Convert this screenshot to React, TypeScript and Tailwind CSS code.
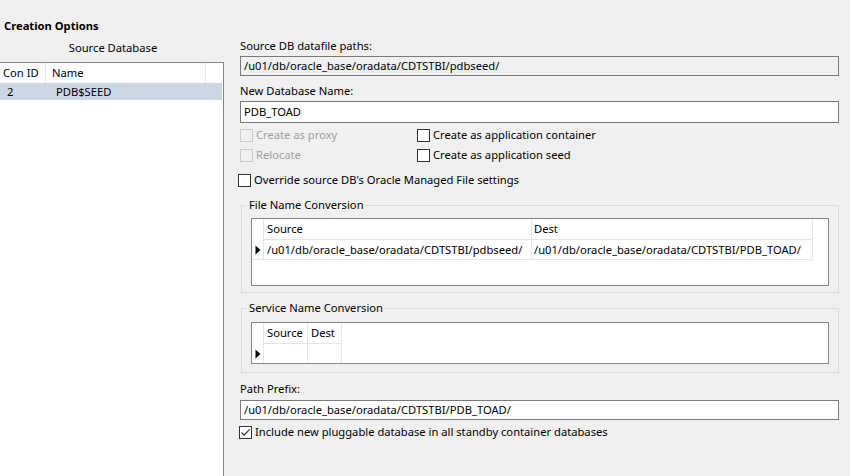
import React from 'react';

function CheckBox({ label, checked = false, disabled = false }: { label: string; checked?: boolean; disabled?: boolean }) {
  return (
    <div className="flex items-center h-[20px]">
      <span
        className={
          disabled
            ? 'w-[13px] h-[13px] border border-[#cccccc] bg-[#f0f0f0] shrink-0'
            : 'w-[13px] h-[13px] border border-[#333333] bg-white shrink-0 flex items-center justify-center'
        }
      >
        {checked && (
          <svg width="11" height="11" viewBox="0 0 11 11">
            <path d="M1.5 5.5 L4.2 8.2 L9.6 2.4" fill="none" stroke="#333" strokeWidth="1.2" />
          </svg>
        )}
      </span>
      <span className={disabled ? 'ml-[3px] text-[#a0a0a0]' : 'ml-[3px] text-black'}>{label}</span>
    </div>
  );
}

function Arrow() {
  return (
    <svg width="6" height="10" viewBox="0 0 6 10">
      <path d="M0.5 0.5 L5.5 5 L0.5 9.5 Z" fill="#000" />
    </svg>
  );
}

export default function App() {
  return (
    <div
      className="w-[850px] h-[476px] overflow-hidden bg-[#f0f0f0] text-[11.2px] leading-[16px] text-black flex flex-col"
      style={{ fontFamily: '"Noto Sans", "Open Sans", sans-serif' }}
    >
      <div className="pt-[18px] pl-[4px] font-bold h-[36px]">Creation Options</div>

      <div className="flex flex-1 min-h-0">
        {/* left: source database list */}
        <div className="w-[224px] flex flex-col pt-[4px]">
          <div className="text-center h-[16px] pl-[2px]">Source Database</div>
          <div className="mt-[6px] flex-1 bg-white border border-[#828790] border-l-0 border-b-0">
            <div className="flex h-[20px] items-center">
              <div className="w-[46px] pl-[3px] h-full flex items-center border-r border-[#e5e5e5]">Con ID</div>
              <div className="w-[160px] pl-[6px] h-full flex items-center border-r border-[#e5e5e5]">Name</div>
            </div>
            <div className="flex h-[17px] items-center bg-[#cbd8e4] mr-[1px]">
              <div className="w-[46px] pl-[7px]">2</div>
              <div className="pl-[10px]">PDB$SEED</div>
            </div>
          </div>
        </div>

        {/* right: options */}
        <div className="ml-[16px] w-[599px] flex flex-col pt-[2px]">
          <div className="h-[16px]">Source DB datafile paths:</div>
          <div className="mt-[2px] h-[20px] border border-[#7a7a7a] bg-[#f0f0f0] flex items-center pl-[3px]">
            /u01/db/oracle_base/oradata/CDTSTBI/pdbseed/
          </div>

          <div className="mt-[7px] h-[16px]">New Database Name:</div>
          <div className="mt-[2px] h-[22px] border border-[#7a7a7a] bg-white flex items-center pl-[3px]">PDB_TOAD</div>

          <div className="mt-[2px] flex">
            <div className="w-[176px]">
              <CheckBox label="Create as proxy" disabled />
              <CheckBox label="Relocate" disabled />
            </div>
            <div className="ml-[1px]">
              <CheckBox label="Create as application container" />
              <CheckBox label="Create as application seed" />
            </div>
          </div>

          <div className="mt-[5px] -ml-[2px]">
            <CheckBox label="Override source DB's Oracle Managed File settings" />
          </div>

          {/* File Name Conversion */}
          <div className="relative ml-[1px] mt-[15px] border border-[#dcdcdc] pt-[12px] pb-[6px] pl-[9px] pr-[9px]">
            <span className="absolute -top-[9px] left-[5px] bg-[#f0f0f0] px-[2px] leading-[16px]">File Name Conversion</span>
            <div className="h-[68px] bg-white border border-[#828790]">
              <div className="flex h-[21px]">
                <div className="w-[12px] border-r border-[#e5e5e5]" />
                <div className="w-[268px] pl-[3px] flex items-center border-r border-b border-[#e5e5e5]">Source</div>
                <div className="w-[281px] pl-[2px] flex items-center border-r border-b border-[#e5e5e5]">Dest</div>
              </div>
              <div className="flex h-[20px]">
                <div className="w-[12px] flex items-center justify-center border-r border-b border-[#e5e5e5]">
                  <Arrow />
                </div>
                <div className="w-[268px] pl-[3px] flex items-center border-r border-b border-[#e5e5e5]">
                  /u01/db/oracle_base/oradata/CDTSTBI/pdbseed/
                </div>
                <div className="w-[281px] pl-[2px] flex items-center border-r border-b border-[#e5e5e5]">
                  /u01/db/oracle_base/oradata/CDTSTBI/PDB_TOAD/
                </div>
              </div>
            </div>
          </div>

          {/* Service Name Conversion */}
          <div className="relative ml-[1px] mt-[15px] border border-[#dcdcdc] pt-[13px] pb-[8px] pl-[9px] pr-[9px]">
            <span className="absolute -top-[9px] left-[5px] bg-[#f0f0f0] px-[2px] leading-[16px]">Service Name Conversion</span>
            <div className="h-[42px] bg-white border border-[#828790]">
              <div className="flex h-[21px]">
                <div className="w-[12px] border-r border-[#e5e5e5]" />
                <div className="w-[44px] pl-[3px] flex items-center border-r border-b border-[#e5e5e5]">Source</div>
                <div className="w-[34px] pl-[3px] flex items-center border-r border-b border-[#e5e5e5]">Dest</div>
              </div>
              <div className="flex h-[19px]">
                <div className="w-[12px] flex items-center justify-center border-r border-[#e5e5e5]">
                  <Arrow />
                </div>
                <div className="w-[44px] border-r border-[#e5e5e5]" />
                <div className="w-[34px] border-r border-[#e5e5e5]" />
              </div>
            </div>
          </div>

          <div className="mt-[8px] h-[16px]">Path Prefix:</div>
          <div className="mt-[3px] h-[20px] border border-[#7a7a7a] bg-white flex items-center pl-[3px]">
            /u01/db/oracle_base/oradata/CDTSTBI/PDB_TOAD/
          </div>

          <div className="mt-[2px] -ml-[1px]">
            <CheckBox label="Include new pluggable database in all standby container databases" checked />
          </div>
        </div>
      </div>
    </div>
  );
}
